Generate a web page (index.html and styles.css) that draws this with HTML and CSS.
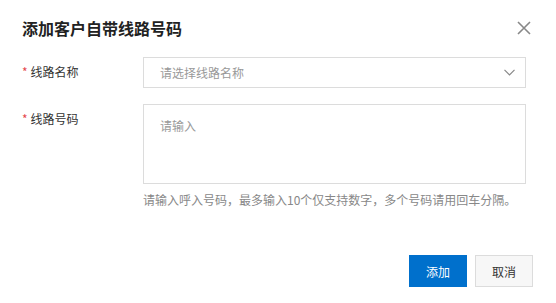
FILE: index.html
```html
<!DOCTYPE html>
<html lang="zh-CN">
<head>
    <meta charset="UTF-8">
    <meta name="viewport" content="width=device-width, initial-scale=1.0">
    <title>添加客户自带线路号码</title>
    <link rel="stylesheet" href="styles.css">
</head>
<body>
    <div class="dialog">
        <div class="dialog-header">
            <h2>添加客户自带线路号码</h2>
            <span class="close-btn">
                <svg width="14" height="14" viewBox="0 0 14 14">
                    <path d="M1 1L13 13M13 1L1 13" stroke="#888" stroke-width="1.6" fill="none"/>
                </svg>
            </span>
        </div>

        <div class="dialog-body">
            <div class="form-row">
                <label class="form-label"><span class="required">*</span>线路名称</label>
                <div class="select-box">
                    <span class="placeholder">请选择线路名称</span>
                    <svg class="arrow" width="11" height="7" viewBox="0 0 11 7">
                        <path d="M0.5 0.8L5.5 5.8L10.5 0.8" stroke="#888" stroke-width="1.2" fill="none"/>
                    </svg>
                </div>
            </div>

            <div class="form-row">
                <label class="form-label"><span class="required">*</span>线路号码</label>
                <div class="field">
                    <textarea placeholder="请输入"></textarea>
                    <div class="help-text">请输入呼入号码，最多输入10个仅支持数字，多个号码请用回车分隔。</div>
                </div>
            </div>
        </div>

        <div class="dialog-footer">
            <button class="btn btn-primary">添加</button>
            <button class="btn">取消</button>
        </div>
    </div>
</body>
</html>
```

FILE: styles.css
```css
body {
    margin: 0;
    background: #fff;
    font-family: "Noto Sans CJK SC", "Liberation Sans", sans-serif;
    color: #333;
}
.dialog {
    width: 556px;
    height: 303px;
    box-sizing: border-box;
}
.dialog-header {
    display: flex;
    justify-content: space-between;
    align-items: center;
    padding: 16px 25px 0 22px;
    height: 24px;
}
.dialog-header h2 {
    margin: 0;
    font-size: 16px;
    font-weight: bold;
    color: #222;
    line-height: 24px;
}
.close-btn {
    display: flex;
    cursor: pointer;
}
.dialog-body {
    padding: 17px 30px 0 22px;
}
.form-row {
    display: flex;
    margin-bottom: 16px;
}
.form-label {
    width: 121px;
    flex-shrink: 0;
    font-size: 12px;
    line-height: 30px;
    color: #333;
}
.required {
    color: #e5484d;
    margin-right: 3px;
}
.select-box {
    flex: 1;
    height: 31px;
    box-sizing: border-box;
    border: 1px solid #dcdcdc;
    display: flex;
    align-items: center;
    justify-content: space-between;
    padding: 0 10px 0 16px;
}
.placeholder {
    font-size: 12px;
    color: #999;
}
.field {
    flex: 1;
}
textarea {
    display: block;
    width: 100%;
    height: 80px;
    box-sizing: border-box;
    border: 1px solid #dcdcdc;
    padding: 12px 16px;
    font-family: inherit;
    font-size: 12px;
    resize: none;
    outline: none;
}
textarea::placeholder {
    color: #999;
}
.help-text {
    margin-top: 6px;
    font-size: 12px;
    line-height: 20px;
    color: #888;
}
.dialog-footer {
    display: flex;
    justify-content: flex-end;
    gap: 8px;
    padding: 29px 23px 0 0;
}
.btn {
    width: 58px;
    height: 32px;
    border: 1px solid #dcdcdc;
    background: #f7f7f7;
    color: #333;
    font-family: inherit;
    font-size: 12px;
    cursor: pointer;
}
.btn-primary {
    background: #0070cc;
    border-color: #0070cc;
    color: #fff;
}
```
